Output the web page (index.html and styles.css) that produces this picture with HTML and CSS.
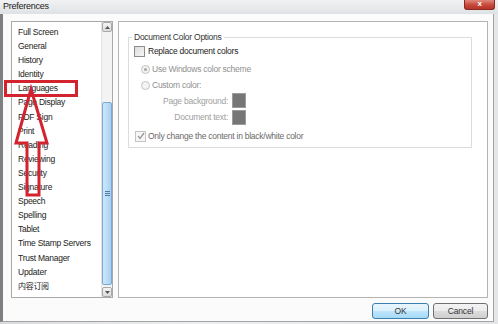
FILE: index.html
```html
<!DOCTYPE html>
<html lang="en">
<head>
  <meta charset="UTF-8">
  <title>Preferences</title>
  <link rel="stylesheet" href="styles.css">
</head>
<body>
  <div class="window">
    <div class="titlebar">
      <span class="title">Preferences</span>
      <span class="close">x</span>
    </div>

    <div class="dialog">
      <div class="panels">
        <!-- category list -->
        <div class="list-panel">
          <ul class="categories">
            <li>Full Screen</li>
            <li>General</li>
            <li>History</li>
            <li>Identity</li>
            <li>Languages</li>
            <li>Page Display</li>
            <li>PDF Sign</li>
            <li>Print</li>
            <li>Reading</li>
            <li>Reviewing</li>
            <li>Security</li>
            <li>Signature</li>
            <li>Speech</li>
            <li>Spelling</li>
            <li>Tablet</li>
            <li>Time Stamp Servers</li>
            <li>Trust Manager</li>
            <li>Updater</li>
            <li class="cjk">内容订阅</li>
          </ul>
          <div class="scrollbar">
            <div class="sb-btn">
              <svg width="5" height="3" viewBox="0 0 5 3"><path d="M0 3 L2.5 0 L5 3 Z" fill="#555"/></svg>
            </div>
            <div class="sb-track"></div>
            <div class="sb-thumb"><span class="grip"></span></div>
            <div class="sb-track sb-track-end"></div>
            <div class="sb-btn">
              <svg width="5" height="3" viewBox="0 0 5 3"><path d="M0 0 L2.5 3 L5 0 Z" fill="#555"/></svg>
            </div>
          </div>
        </div>

        <!-- options -->
        <div class="options-panel">
          <fieldset class="group">
            <legend>Document Color Options</legend>

            <div class="row row-replace">
              <span class="checkbox"></span>
              <span class="label">Replace document colors</span>
            </div>

            <div class="row row-radio row-windows">
              <span class="radio selected"></span>
              <span class="label disabled">Use Windows color scheme</span>
            </div>

            <div class="row row-radio">
              <span class="radio"></span>
              <span class="label disabled">Custom color:</span>
            </div>

            <div class="row row-color row-bg">
              <span class="color-label">Page background:</span>
              <span class="swatch"></span>
            </div>

            <div class="row row-color row-text">
              <span class="color-label">Document text:</span>
              <span class="swatch"></span>
            </div>

            <div class="row row-only">
              <span class="checkbox checked">
                <svg width="8" height="8" viewBox="0 0 8 8"><path d="M1 4 L3 6.5 L7 1" fill="none" stroke="#9a9a9a" stroke-width="1.3"/></svg>
              </span>
              <span class="label muted">Only change the content in black/white color</span>
            </div>
          </fieldset>
        </div>
      </div>

      <div class="buttons">
        <button class="btn btn-ok">OK</button>
        <button class="btn">Cancel</button>
      </div>
    </div>

    <!-- red annotation drawn over the dialog -->
    <svg class="annotation" width="498" height="324" viewBox="0 0 498 324">
      <rect x="5.5" y="81.5" width="71" height="14" fill="none" stroke="#d3232e" stroke-width="3"/>
      <polygon points="31,89 47,143 39,143 39,195 27,195 27,143 16,143" fill="none" stroke="#d3232e" stroke-width="3" stroke-linejoin="miter"/>
    </svg>
  </div>
</body>
</html>
```

FILE: styles.css
```css
body {
  margin: 0;
  padding: 0;
  font-family: "Liberation Sans", Arial, sans-serif;
  font-size: 8.5px;
  letter-spacing: -0.25px;
  color: #222;
  background: #e9e9e9;
}

.window {
  position: relative;
  width: 498px;
  height: 324px;
  display: flex;
  flex-direction: column;
  background: linear-gradient(90deg, #d9dcdf, #eceef0 40%, #e4e6e8);
  overflow: hidden;
}

.titlebar {
  height: 14px;
  display: flex;
  align-items: flex-start;
  justify-content: space-between;
  background: linear-gradient(180deg, #f1f2f3, #dfe2e5);
}

.title {
  margin-left: 3px;
  line-height: 13px;
  font-size: 9px;
  color: #1a1a1a;
}

.close {
  width: 29px;
  height: 9px;
  margin-right: 3px;
  border-radius: 0 0 3px 3px;
  background: linear-gradient(180deg, #e08a7c, #c7473a 55%, #b63528);
  border: 1px solid #8a2a22;
  border-top: none;
  color: #fff;
  font-size: 8px;
  line-height: 7px;
  text-align: center;
  font-weight: bold;
}

.dialog {
  flex: 1;
  display: flex;
  flex-direction: column;
  margin: 0 4px 2px 0;
  padding: 7px 5px 0 8px;
  background: #fbfbfb;
  border-left: 3px solid #7d7f82;
  border-right: 1px solid #a4a4a4;
  border-bottom: 1px solid #a4a4a4;
}

.panels {
  height: 277px;
  display: flex;
  gap: 5px;
}

/* left list */
.list-panel {
  width: 100px;
  display: flex;
  border: 1px solid #a9a9a9;
  background: #fff;
}

.categories {
  flex: 1;
  list-style: none;
  margin: 0;
  padding: 3px 0 0 6px;
}

.categories li {
  line-height: 14.1px;
  height: 14.1px;
  color: #222;
  white-space: nowrap;
}

.categories li.cjk {
  font-family: "Noto Sans CJK SC", sans-serif;
  font-size: 8px;
  letter-spacing: -0.3px;
}

.scrollbar {
  width: 10px;
  display: flex;
  flex-direction: column;
  background: #f0f0f0;
  border-left: 1px solid #e2e2e2;
}

.sb-btn {
  height: 10px;
  display: flex;
  align-items: center;
  justify-content: center;
  background: linear-gradient(180deg, #f4f4f4, #dcdcdc);
  border: 1px solid #a8a8a8;
  border-radius: 2px;
  box-sizing: border-box;
}

.sb-track {
  height: 70px;
  background: #f3f3f3;
}

.sb-track-end {
  height: 2px;
}

.sb-thumb {
  flex: 1;
  display: flex;
  align-items: center;
  justify-content: center;
  background: linear-gradient(90deg, #cfe7fa, #b8dbf6 60%, #a9d0f1);
  border: 1px solid #7aa9d4;
  border-radius: 2px;
}

.grip {
  width: 5px;
  height: 5px;
  background: repeating-linear-gradient(180deg, #4d7ca8 0 1px, transparent 1px 2px);
}

/* right options */
.options-panel {
  flex: 1;
  border: 1px solid #b4b4b4;
  background: #fff;
}

.group {
  margin: 9px 15px 0 9px;
  padding: 0 0 3px 0;
  border: 1px solid #dcdcdc;
}

.group legend {
  margin-left: 3px;
  padding: 0 2px;
  line-height: 12px;
  color: #333;
}

.row {
  height: 16px;
  display: flex;
  align-items: center;
}

.row-replace {
  padding-left: 5px;
}

.row-radio {
  padding-left: 12px;
}

.row-windows {
  margin-top: 2px;
}

.row-bg {
  height: 15px;
}

.row-text {
  margin-top: 1px;
}

.row-only {
  margin-top: 3px;
  padding-left: 6px;
}

.checkbox {
  width: 9px;
  height: 9px;
  display: flex;
  align-items: center;
  justify-content: center;
  border: 1px solid #8c8c8c;
  background: linear-gradient(135deg, #dcdcdc, #f6f6f6);
}

.checkbox.checked {
  border-color: #c4c4c4;
  background: #f7f7f7;
}

.radio {
  width: 7px;
  height: 7px;
  border-radius: 50%;
  border: 1px solid #c2c2c2;
  background: #f4f4f4;
  display: flex;
  align-items: center;
  justify-content: center;
}

.radio.selected::after {
  content: "";
  width: 3px;
  height: 3px;
  border-radius: 50%;
  background: #a5a5a5;
}

.label {
  margin-left: 3px;
  color: #222;
}

.label.disabled {
  margin-left: 2px;
  color: #8f8f8f;
}

.label.muted {
  margin-left: 2px;
  color: #6a6a6a;
}

.color-label {
  width: 99px;
  text-align: right;
  color: #a0a0a0;
}

.swatch {
  width: 12px;
  height: 13px;
  margin-left: 4px;
  background: #767676;
  border: 1px solid #9c9c9c;
}

/* buttons */
.buttons {
  display: flex;
  justify-content: flex-end;
  gap: 4px;
  margin-top: 5px;
}

.btn {
  height: 16px;
  padding: 0;
  font-family: inherit;
  font-size: 8.5px;
  letter-spacing: -0.2px;
  color: #333;
  border: 1px solid #707070;
  border-radius: 3px;
  background: linear-gradient(180deg, #f3f3f3, #ebebeb 50%, #dddddd 50%, #cfcfcf);
  width: 55px;
}

.btn-ok {
  width: 57px;
  border-color: #3c7fb1;
  background: linear-gradient(180deg, #eaf6fd, #d9f0fc 50%, #bee6fd 50%, #a7d9f5);
}

.annotation {
  position: absolute;
  top: 0;
  left: 0;
  pointer-events: none;
}
```
